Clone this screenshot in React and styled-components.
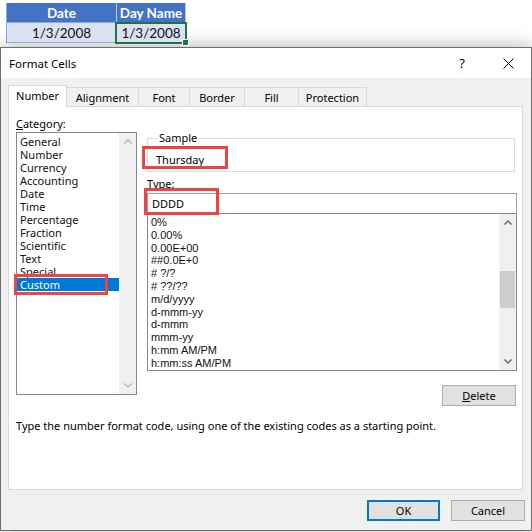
import React from "react";
import styled, { createGlobalStyle } from "styled-components";

const ui = `"Noto Sans", "Liberation Sans", sans-serif`;

const GlobalStyle = createGlobalStyle`
  html, body {
    margin: 0;
    padding: 0;
    background: #fff;
  }
  body {
    width: 532px;
    height: 532px;
    overflow: hidden;
    font-family: ${ui};
  }
`;

const Sheet = styled.div`
  display: grid;
  grid-template-columns: 110px 69px;
  grid-template-rows: 20px 20px;
  width: 179px;
  margin: 3px 0 0 6px;
  font-family: Lato, "Liberation Sans", sans-serif;
  font-size: 13.5px;
  border-left: 1px solid #8ea9db;
`;

const Cell = styled.div`
  position: relative;
  display: flex;
  align-items: center;
  justify-content: center;
  background: ${(p) => (p.head ? "#4472c4" : "#d9e1f2")};
  color: ${(p) => (p.head ? "#fff" : "#111")};
  font-weight: ${(p) => (p.head ? 700 : 400)};
  border-right: 1px solid ${(p) => (p.head ? "#b4c6e7" : "#8ea9db")};
  border-bottom: 1px solid #8ea9db;
`;

const Selection = styled.div`
  position: absolute;
  inset: -1px -2px -2px -2px;
  border: 2px solid #217346;
  pointer-events: none;

  &::after {
    content: "";
    position: absolute;
    right: -4px;
    bottom: -4px;
    width: 5px;
    height: 5px;
    background: #217346;
    border: 1px solid #fff;
  }
`;

const Dialog = styled.div`
  margin-top: 4px;
  width: 532px;
  box-sizing: border-box;
  border: 1px solid #6e6e6e;
  background: #f0f0f0;
  box-shadow: 0 0 18px rgba(0, 0, 0, 0.32);
  font-family: ${ui};
  font-size: 11px;
  color: #000;
`;

const TitleBar = styled.div`
  display: flex;
  align-items: center;
  height: 30px;
  padding-left: 8px;
  background: #fff;
  font-size: 11.5px;
`;

const Title = styled.div`
  flex: 1;
`;

const TitleButton = styled.div`
  display: flex;
  align-items: center;
  justify-content: center;
  width: 46px;
  height: 30px;
  font-size: 13px;
`;

const Body = styled.div`
  padding: 7px 8px 9px 7px;
`;

const TabRow = styled.div`
  display: flex;
  align-items: flex-end;
  height: 21px;
`;

const Tab = styled.div`
  position: relative;
  z-index: ${(p) => (p.active ? 2 : 1)};
  display: flex;
  align-items: center;
  justify-content: center;
  box-sizing: border-box;
  width: ${(p) => p.w}px;
  height: ${(p) => (p.active ? 22 : 19)}px;
  margin-left: -1px;
  margin-bottom: ${(p) => (p.active ? -1 : 0)}px;
  padding-bottom: ${(p) => (p.active ? 2 : 0)}px;
  background: ${(p) => (p.active ? "#fff" : "#f0f0f0")};
  border: 1px solid #d9d9d9;
  border-bottom: none;

  &:first-child {
    margin-left: 0;
  }
`;

const Panel = styled.div`
  box-sizing: border-box;
  height: 384px;
  padding: 9px 5px 0 7px;
  background: #fff;
  border: 1px solid #d9d9d9;
`;

const Columns = styled.div`
  display: grid;
  grid-template-columns: 121px 1fr;
  column-gap: 10px;
  align-items: start;
`;

const Column = styled.div`
  display: flex;
  flex-direction: column;
`;

const Label = styled.div`
  line-height: 16px;
  height: 16px;
`;

const ListBox = styled.div`
  display: flex;
  box-sizing: border-box;
  height: ${(p) => p.h}px;
  border: 1px solid #828790;
  background: #fff;
`;

const Items = styled.div`
  flex: 1;
  padding-top: ${(p) => p.pt}px;
  font-family: ${(p) => (p.classic ? `"Liberation Sans", Arial, sans-serif` : ui)};
  font-size: 11px;
`;

const Item = styled.div`
  position: relative;
  height: ${(p) => p.lh}px;
  line-height: ${(p) => p.lh}px;
  padding-left: 3px;
  white-space: nowrap;
  background: ${(p) => (p.selected ? "#0078d7" : "transparent")};
  color: ${(p) => (p.selected ? "#fff" : "#111")};
`;

const ScrollBar = styled.div`
  display: flex;
  flex-direction: column;
  width: 17px;
  background: #f0f0f0;
`;

const Arrow = styled.div`
  display: flex;
  align-items: center;
  justify-content: center;
  height: 17px;
  color: ${(p) => (p.dim ? "#b4b4b4" : "#606060")};
`;

const Thumb = styled.div`
  margin: 40px 1px 0;
  height: 37px;
  background: #cdcdcd;
`;

const Spacer = styled.div`
  flex: 1;
`;

const Group = styled.fieldset`
  margin: 16px 2px 0 0;
  padding: 8px 8px 4px;
  border: 1px solid #dcdcdc;
`;

const Legend = styled.legend`
  margin-left: 1px;
  padding: 0 2px;
  line-height: 12px;
`;

const Value = styled.span`
  position: relative;
  display: inline-block;
  line-height: 14px;
`;

const Highlight = styled.span`
  position: absolute;
  top: ${(p) => p.t}px;
  left: ${(p) => p.l}px;
  width: ${(p) => p.w}px;
  height: ${(p) => p.h}px;
  box-sizing: border-box;
  border: 3px solid #ea4646;
  pointer-events: none;
`;

const TypeLabel = styled.div`
  margin-top: 5px;
  line-height: 14px;
`;

const Field = styled.div`
  position: relative;
  margin-top: 2px;
`;

const Input = styled.div`
  box-sizing: border-box;
  height: 20px;
  padding-left: 4px;
  line-height: 19px;
  border: 1px solid #a0a0a0;
  border-bottom: none;
  background: #fff;
`;

const Button = styled.div`
  display: flex;
  align-items: center;
  justify-content: center;
  box-sizing: border-box;
  width: ${(p) => p.w}px;
  height: 21px;
  background: #e1e1e1;
  border: ${(p) => (p.primary ? "2px solid #0078d7" : "1px solid #adadad")};
`;

const DeleteButton = styled(Button)`
  align-self: flex-end;
  margin: 14px 1px 0 0;
`;

const Description = styled.div`
  margin-top: 13px;
  line-height: 14px;
`;

const Footer = styled.div`
  display: flex;
  justify-content: flex-end;
  gap: 11px;
  padding-top: 10px;
  margin-right: -2px;
`;

const Chevron = ({ up }) => (
  <svg width="8" height="5" viewBox="0 0 8 5">
    <path
      d={up ? "M0.5 4.5 L4 1 L7.5 4.5" : "M0.5 0.5 L4 4 L7.5 0.5"}
      fill="none"
      stroke="currentColor"
      strokeWidth="1.4"
    />
  </svg>
);

const tabs = [
  ["Number", 59],
  ["Alignment", 73],
  ["Font", 52],
  ["Border", 56],
  ["Fill", 55],
  ["Protection", 69],
];

const categories = [
  "General",
  "Number",
  "Currency",
  "Accounting",
  "Date",
  "Time",
  "Percentage",
  "Fraction",
  "Scientific",
  "Text",
  "Special",
  "Custom",
];

const formats = [
  "0%",
  "0.00%",
  "0.00E+00",
  "##0.0E+0",
  "# ?/?",
  "# ??/??",
  "m/d/yyyy",
  "d-mmm-yy",
  "d-mmm",
  "mmm-yy",
  "h:mm AM/PM",
  "h:mm:ss AM/PM",
];

export default function App() {
  return (
    <>
      <GlobalStyle />
      <Sheet>
        <Cell head>Date</Cell>
        <Cell head>Day Name</Cell>
        <Cell>1/3/2008</Cell>
        <Cell>
          1/3/2008
          <Selection />
        </Cell>
      </Sheet>

      <Dialog>
        <TitleBar>
          <Title>Format Cells</Title>
          <TitleButton>?</TitleButton>
          <TitleButton>
            <svg width="11" height="11" viewBox="0 0 11 11">
              <path d="M0.5 0.5 L10.5 10.5 M10.5 0.5 L0.5 10.5" stroke="#000" strokeWidth="1" />
            </svg>
          </TitleButton>
        </TitleBar>

        <Body>
          <TabRow>
            {tabs.map(([name, w], i) => (
              <Tab key={name} w={w} active={i === 0}>
                {name}
              </Tab>
            ))}
          </TabRow>

          <Panel>
            <Columns>
              <Column>
                <Label>
                  <u>C</u>ategory:
                </Label>
                <ListBox h={263}>
                  <Items pt={2}>
                    {categories.map((c) => (
                      <Item key={c} lh={13} selected={c === "Custom"}>
                        {c}
                        {c === "Custom" && <Highlight t={-4} l={-3} w={94} h={21} />}
                      </Item>
                    ))}
                  </Items>
                  <ScrollBar>
                    <Arrow dim>
                      <Chevron up />
                    </Arrow>
                    <Spacer />
                    <Arrow dim>
                      <Chevron />
                    </Arrow>
                  </ScrollBar>
                </ListBox>
              </Column>

              <Column>
                <Group>
                  <Legend>Sample</Legend>
                  <Value>
                    Thursday
                    <Highlight t={-7} l={-14} w={86} h={23} />
                  </Value>
                </Group>
                <TypeLabel>
                  <u>T</u>ype:
                </TypeLabel>
                <Field>
                  <Input>DDDD</Input>
                  <Highlight t={-5} l={-3} w={75} h={27} />
                </Field>
                <ListBox h={158}>
                  <Items pt={2} classic>
                    {formats.map((f) => (
                      <Item key={f} lh={12.8}>
                        {f}
                      </Item>
                    ))}
                  </Items>
                  <ScrollBar>
                    <Arrow>
                      <Chevron up />
                    </Arrow>
                    <Thumb />
                    <Spacer />
                    <Arrow>
                      <Chevron />
                    </Arrow>
                  </ScrollBar>
                </ListBox>
                <DeleteButton w={74}>
                  <span>
                    <u>D</u>elete
                  </span>
                </DeleteButton>
              </Column>
            </Columns>
            <Description>
              Type the number format code, using one of the existing codes as a starting point.
            </Description>
          </Panel>

          <Footer>
            <Button primary w={73}>
              OK
            </Button>
            <Button w={74}>Cancel</Button>
          </Footer>
        </Body>
      </Dialog>
    </>
  );
}
